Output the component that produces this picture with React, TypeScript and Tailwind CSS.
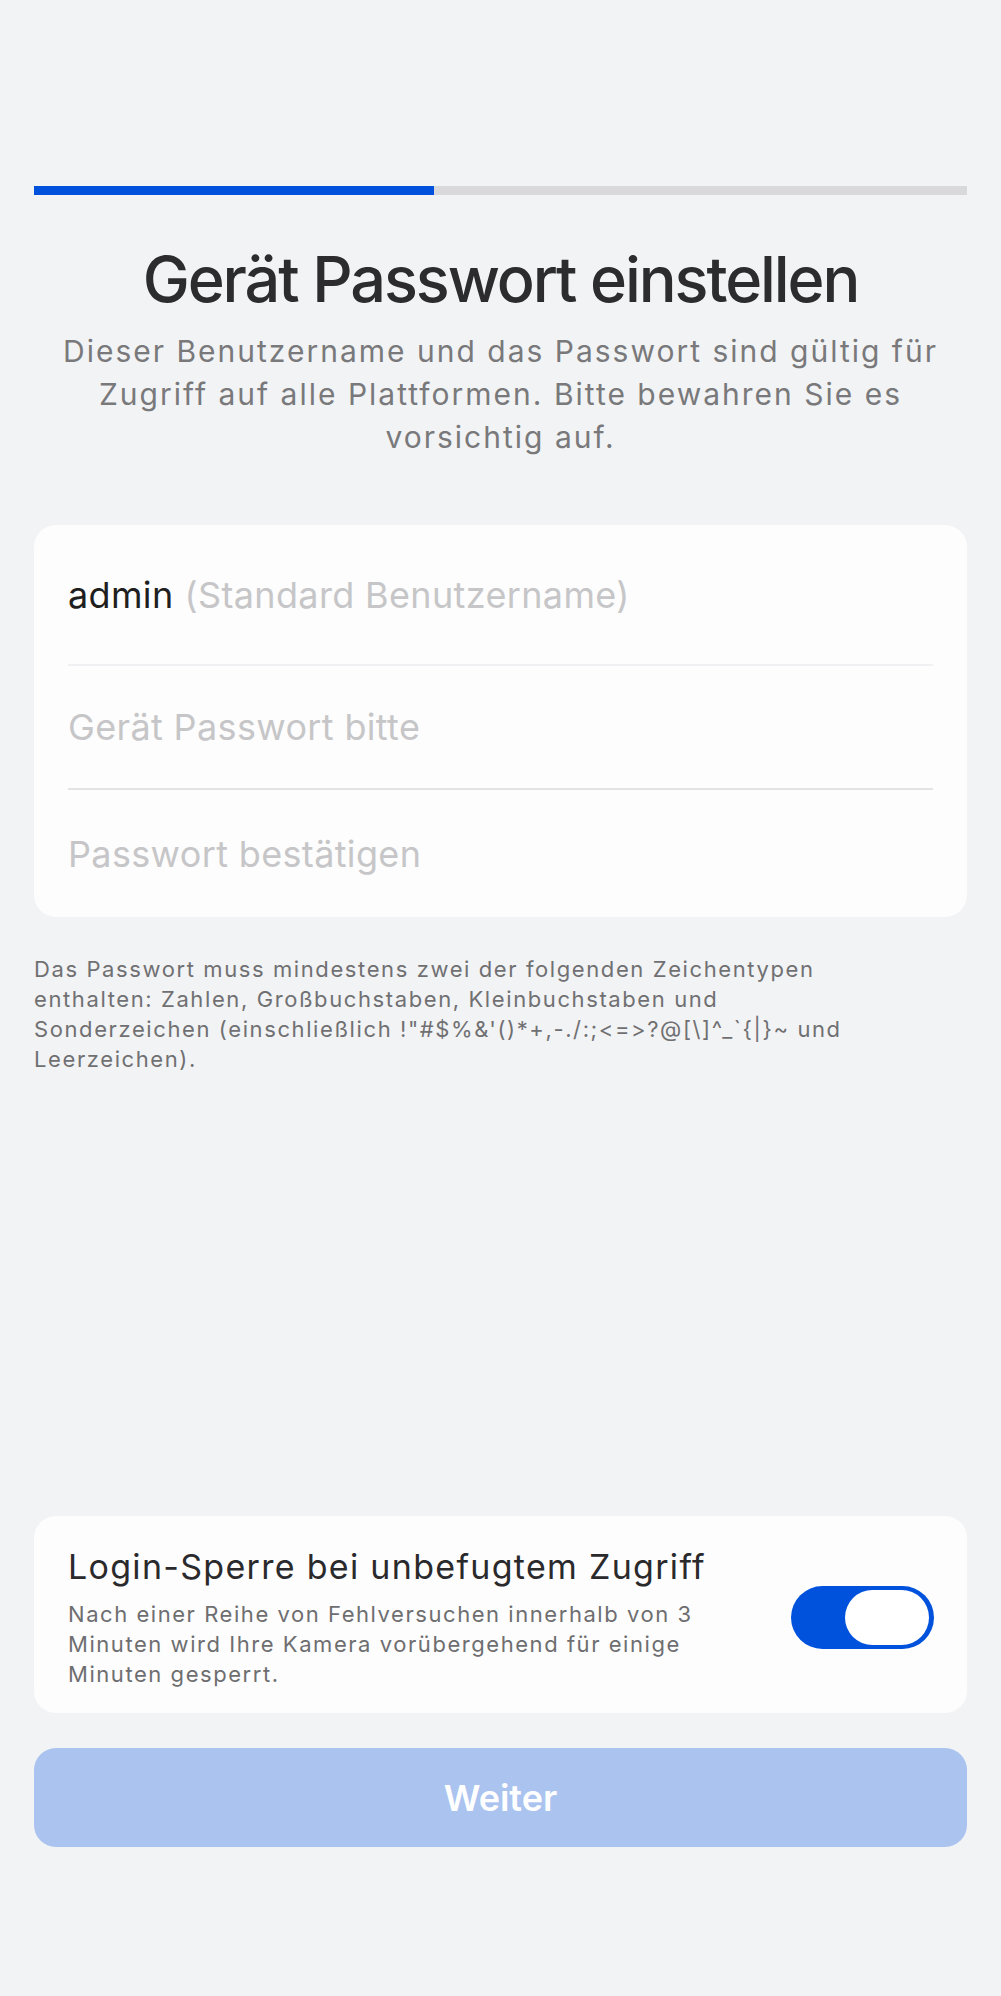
import React from "react";

export default function App() {
  return (
    <div
      className="min-h-[1996px] w-full bg-[#f2f3f5] flex flex-col px-[34px] pb-[149px]"
      style={{ fontFamily: "Inter, 'Noto Sans', sans-serif" }}
    >
      <div className="mt-[186px] h-[9px] w-full bg-[#d9d9dc] flex">
        <div className="h-full w-[400px] bg-[#0052dd]" />
      </div>

      <h1 className="mt-[46px] text-center text-[63px] leading-[76px] font-medium text-[#2c2c2e] tracking-[-2.1px] whitespace-nowrap">
        Gerät Passwort einstellen
      </h1>
      <p className="mt-[13px] text-center text-[30px] leading-[43px] text-[#79797b] tracking-[2px] whitespace-nowrap">
        Dieser Benutzername und das Passwort sind gültig für
        <br />
        Zugriff auf alle Plattformen. Bitte bewahren Sie es
        <br />
        vorsichtig auf.
      </p>

      <div className="mt-[66px] rounded-[22px] bg-[#fdfdfd] px-[34px] flex flex-col">
        <div className="h-[141px] flex items-center border-b-2 border-[#f1f1f3] text-[36px] tracking-[0.35px]">
          <span className="text-[#1f1f1f]">admin</span>
          <span className="ml-[11px] text-[#c6c6c8]">(Standard Benutzername)</span>
        </div>
        <div className="h-[124px] flex items-center border-b-2 border-[#e4e4e6] text-[36px] tracking-[0.35px] text-[#c6c6c8]">
          Gerät Passwort bitte
        </div>
        <div className="h-[127px] flex items-center text-[36px] tracking-[0.35px] text-[#c6c6c8]">
          Passwort bestätigen
        </div>
      </div>

      <p className="mt-[37px] text-[22px] leading-[30px] text-[#707072] tracking-[1.6px] whitespace-nowrap">
        Das Passwort muss mindestens zwei der folgenden Zeichentypen
        <br />
        enthalten: Zahlen, Großbuchstaben, Kleinbuchstaben und
        <br />
        Sonderzeichen (einschließlich !"#$%&amp;'()*+,-./:;&lt;=&gt;?@[\]^_`{"{"}|{"}"}~ und
        <br />
        Leerzeichen).
      </p>

      <div className="flex-1" />

      <div className="rounded-[22px] bg-[#fdfdfd] pl-[34px] pr-[33px] pt-[30px] pb-[24px] flex items-center">
        <div className="flex-1">
          <div className="text-[34px] leading-[42px] text-[#2a2a2c] tracking-[1.3px] whitespace-nowrap">
            Login-Sperre bei unbefugtem Zugriff
          </div>
          <div className="mt-[11px] text-[22px] leading-[30px] text-[#6e6e70] tracking-[1.55px] whitespace-nowrap">
            Nach einer Reihe von Fehlversuchen innerhalb von 3
            <br />
            Minuten wird Ihre Kamera vorübergehend für einige
            <br />
            Minuten gesperrt.
          </div>
        </div>
        <div className="w-[143px] h-[63px] rounded-full bg-[#0052dd] flex items-center justify-end pr-[5px] shrink-0">
          <div className="w-[84px] h-[55px] rounded-full bg-white" />
        </div>
      </div>

      <button className="mt-[35px] h-[99px] w-full rounded-[22px] bg-[#aac3ef] text-white text-[36px] font-semibold">
        Weiter
      </button>
    </div>
  );
}
